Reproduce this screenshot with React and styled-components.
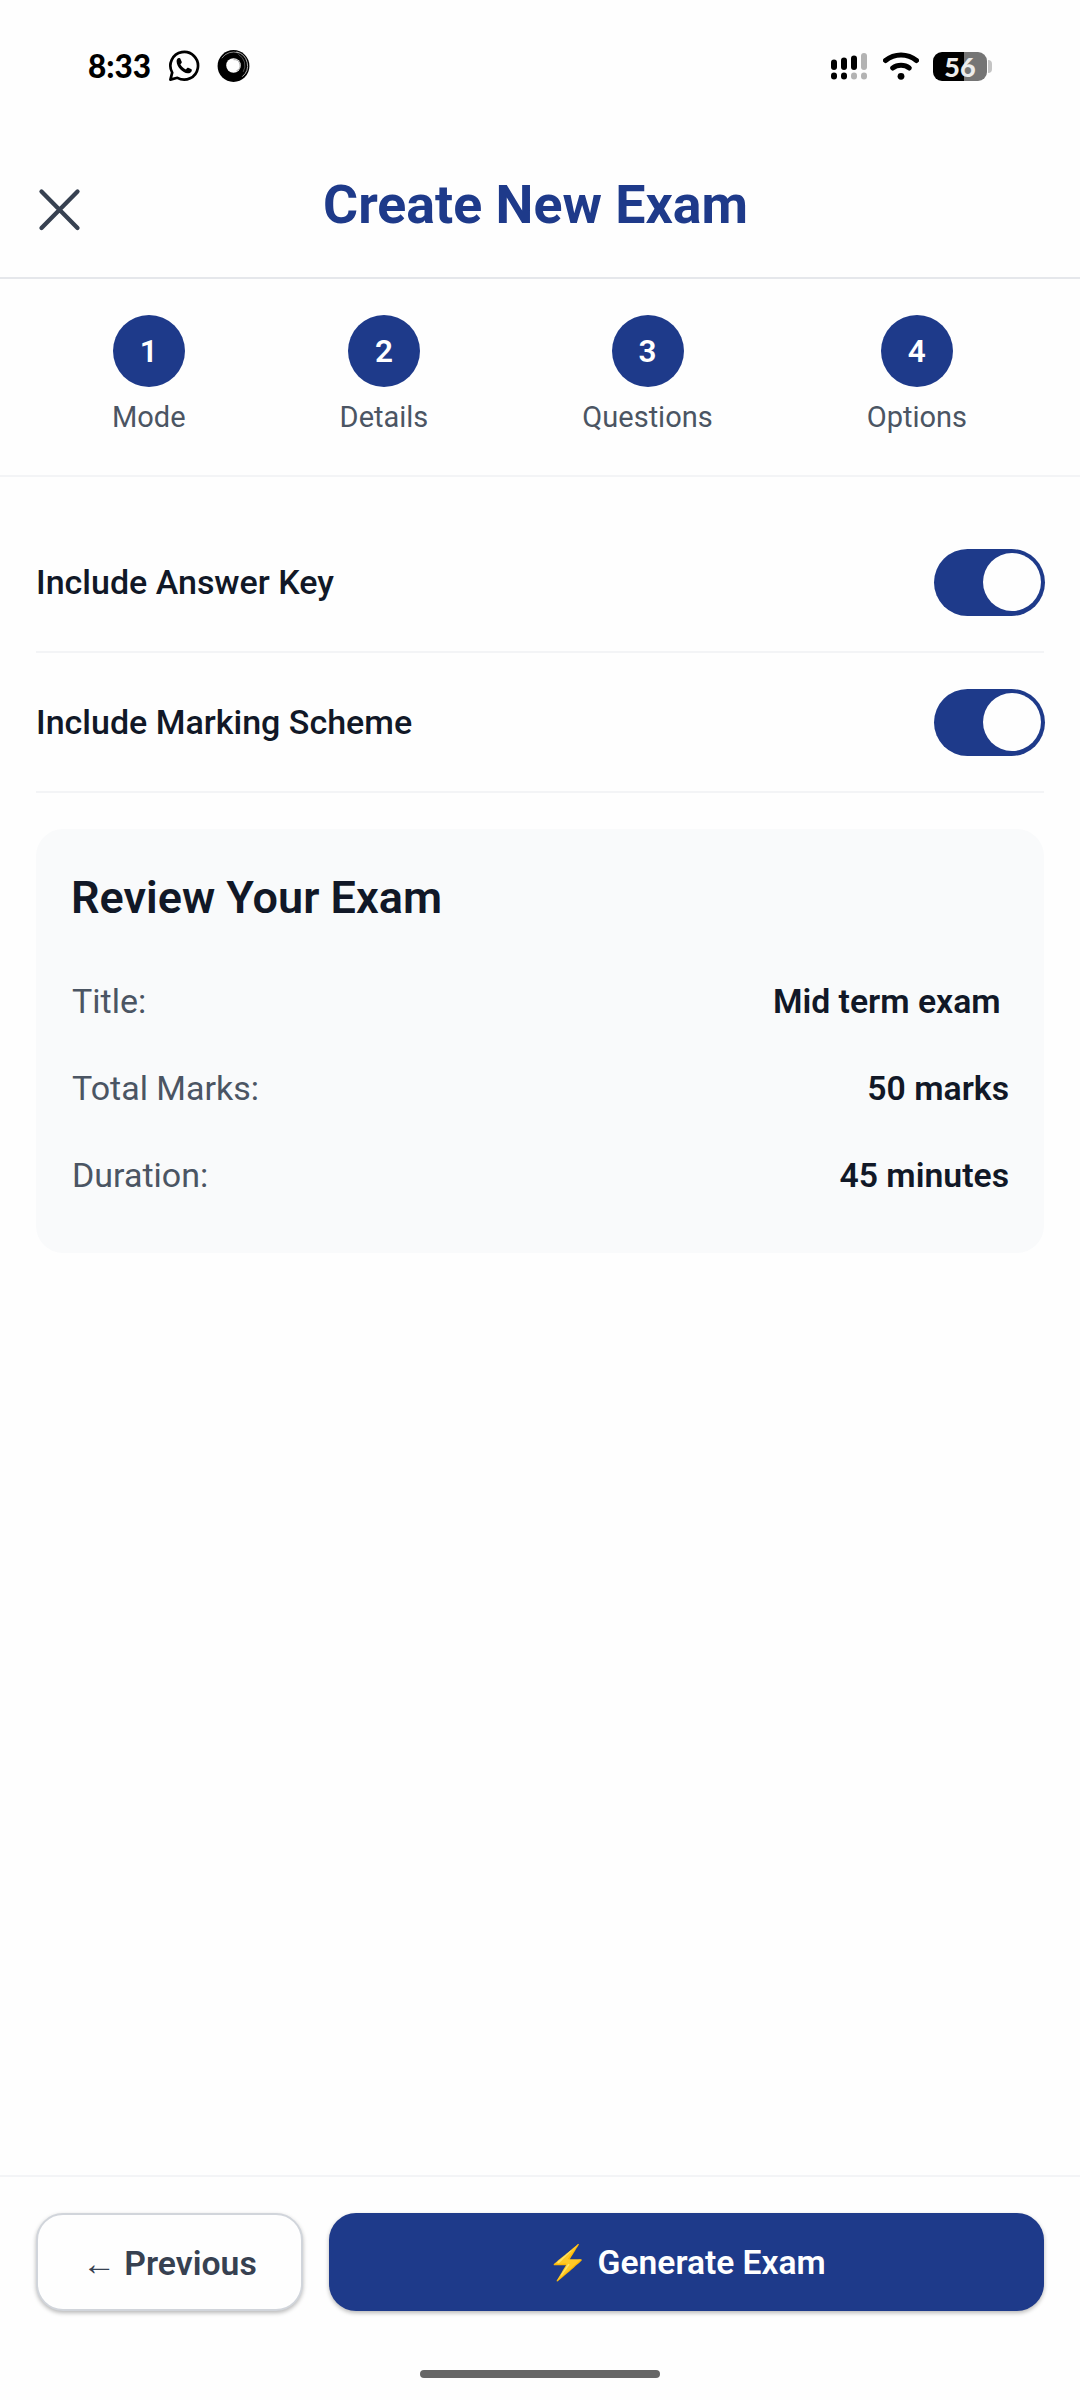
import React, { useState } from "react";
import styled, { createGlobalStyle } from "styled-components";

const GlobalStyle = createGlobalStyle`
  *, *::before, *::after { box-sizing: border-box; }
  body {
    margin: 0;
    background: #fefefe;
    font-family: Roboto, "Liberation Sans", sans-serif;
    color: #111827;
  }
  button { font-family: inherit; }
`;

const Screen = styled.div`
  width: 1080px;
  height: 2400px;
  display: flex;
  flex-direction: column;
  overflow: hidden;
  background: #fefefe;
`;

const StatusBar = styled.div`
  height: 132px;
  padding: 0 88px;
  display: flex;
  align-items: center;
  justify-content: space-between;
`;

const StatusGroup = styled.div`
  display: flex;
  align-items: center;
  gap: ${(p) => p.$gap}px;
`;

const Clock = styled.span`
  font-family: Lato, sans-serif;
  font-size: 31.5px;
  font-weight: 900;
  line-height: 40px;
  width: 63px;
  color: #000;
  white-space: nowrap;
`;

const Battery = styled.div`
  margin-left: -2px;
  display: flex;
  align-items: center;
  gap: 1px;
`;

const BatteryBody = styled.div`
  width: 54px;
  height: 29px;
  border-radius: 9px;
  display: flex;
  align-items: center;
  justify-content: center;
  background: linear-gradient(to right, #000 57.5%, #757575 57.5%);
  color: #ececec;
  font-family: Lato, sans-serif;
  font-weight: 900;
  font-size: 27px;
  line-height: 29px;
`;

const BatteryNub = styled.div`
  width: 4px;
  height: 13px;
  border-radius: 0 4px 4px 0;
  background: #c4c4c4;
`;

const Header = styled.header`
  height: 147px;
  padding: 0 36px 0 36px;
  display: flex;
  align-items: center;
  border-bottom: 2px solid #e5e7eb;
`;

const CloseButton = styled.button`
  width: 46px;
  height: 46px;
  margin-top: 8px;
  padding: 0;
  border: 0;
  background: none;
  display: flex;
`;

const Title = styled.h1`
  flex: 1;
  margin: 0 55px 0 0;
  text-align: center;
  font-size: 53.7px;
  line-height: 64px;
  font-weight: 700;
  color: #1e3a8a;
`;

const Steps = styled.nav`
  height: 198px;
  padding: 36px 36px 0 35px;
  display: flex;
  justify-content: space-around;
  align-items: flex-start;
  border-bottom: 2px solid #f3f4f6;
`;

const Step = styled.div`
  display: flex;
  flex-direction: column;
  align-items: center;
  gap: 13px;
`;

const StepNumber = styled.div`
  width: 72px;
  height: 72px;
  border-radius: 50%;
  display: flex;
  align-items: center;
  justify-content: center;
  background: #1e3a8a;
  color: #fff;
  font-size: 31.5px;
  font-weight: 600;
`;

const StepLabel = styled.span`
  font-size: 29px;
  line-height: 34px;
  color: #4b5563;
`;

const Content = styled.main`
  flex: 1;
  padding: 36px 36px 0;
`;

const OptionRow = styled.div`
  height: 140px;
  display: flex;
  align-items: center;
  justify-content: space-between;
  border-bottom: 2px solid #f3f4f6;
`;

const OptionLabel = styled.span`
  font-size: 34px;
  line-height: 40px;
  font-weight: 500;
`;

const Track = styled.button`
  width: 111px;
  height: 67px;
  margin: 0 -1px 0 0;
  padding: 0 4px;
  border: 0;
  border-radius: 34px;
  display: flex;
  align-items: center;
  justify-content: ${(p) => (p.$on ? "flex-end" : "flex-start")};
  background: ${(p) => (p.$on ? "#1e3a8a" : "#d1d5db")};
`;

const Knob = styled.span`
  width: 58px;
  height: 58px;
  margin-bottom: 1px;
  border-radius: 50%;
  background: #fefefe;
`;

const Card = styled.section`
  height: 424px;
  margin-top: 36px;
  padding: 36px;
  border-radius: 27px;
  background: #f9fafb;
`;

const CardTitle = styled.h2`
  margin: 6px 0 33px -1px;
  font-size: 45px;
  line-height: 54px;
  font-weight: 600;
`;

const DetailRow = styled.div`
  height: 87px;
  margin-right: -1px;
  padding-top: 23px;
  display: flex;
  align-items: baseline;
  justify-content: space-between;
  line-height: 40px;
`;

const DetailLabel = styled.span`
  font-size: 34px;
  color: #4b5563;
`;

const DetailValue = styled.span`
  font-size: 33.75px;
  font-weight: 600;
  white-space: pre;
`;

const Footer = styled.footer`
  height: 225px;
  padding-top: 36px;
  border-top: 2px solid #f3f4f6;
  display: flex;
  flex-direction: column;
  align-items: center;
  justify-content: space-between;
`;

const Actions = styled.div`
  width: 100%;
  padding: 0 36px;
  display: flex;
  gap: 26px;
`;

const ActionButton = styled.button`
  height: 98px;
  padding: ${(p) => (p.$primary ? 1 : 3)}px 0 0;
  flex: ${(p) => (p.$primary ? "1" : "0 0 267px")};
  border: ${(p) => (p.$primary ? "0" : "2px solid #d1d5db")};
  border-radius: 27px;
  display: flex;
  align-items: center;
  justify-content: center;
  background: ${(p) => (p.$primary ? "#1e3a8a" : "#fefefe")};
  color: ${(p) => (p.$primary ? "#fff" : "#374151")};
  box-shadow: 0 2px 4px rgba(0, 0, 0, 0.28);
  font-size: ${(p) => (p.$primary ? 33.6 : 33.75)}px;
  line-height: 40px;
  font-weight: 600;
`;

const HomeBar = styled.div`
  width: 240px;
  height: 8px;
  margin-bottom: 22px;
  border-radius: 4px;
  background: #666;
`;

const ChatIcon = () => (
  <svg width="32" height="32" viewBox="0 0 32 32" fill="none">
    <path
      d="M2.4 29.6 4.2 22.6A13.8 13.8 0 1 1 9.4 27.8Z"
      stroke="#000"
      strokeWidth="2.7"
      strokeLinejoin="round"
    />
    <path
      d="M8.6 11.2c0-1.8 1-3 2.2-3.2 1-.1 1.4.3 1.7 1l1.2 2.7c.3.8-.1 1.4-1.3 2.6 1.3 2.5 3 4.1 5.5 5.1 1.1-1.5 1.6-1.9 2.4-1.6l2.7 1.3c.8.4 1 .9.7 1.8-.6 1.7-2.2 2.5-4 2.4C14.6 22.9 8.7 17 8.6 11.2Z"
      fill="#000"
    />
  </svg>
);

const RingIcon = () => (
  <svg width="33" height="34" viewBox="0 0 34 34" fill="none">
    <circle cx="17" cy="17" r="16.4" fill="#000" />
    <circle cx="17" cy="16.5" r="7.5" fill="#fefefe" />
    <path d="M5 9A14.5 14.5 0 0 1 22 3.5" stroke="#aaa" strokeWidth="0.8" />
    <path d="M20 2.5A14.5 14.5 0 0 1 26 28" stroke="#ccc" strokeWidth="0.9" />
    <path d="M22 5A13 13 0 0 1 27 23" stroke="#777" strokeWidth="0.7" />
    <path d="M17 10.5A6 6 0 0 1 20 22" stroke="#888" strokeWidth="0.7" />
  </svg>
);

const SignalIcon = () => (
  <svg width="36" height="28" viewBox="0 0 36 28">
    <rect x="0" y="7.5" width="6" height="10.5" rx="3" />
    <rect x="10" y="5.5" width="6" height="12.5" rx="3" />
    <rect x="20" y="3.5" width="6" height="14.5" rx="3" />
    <rect x="30" y="1" width="6" height="17" rx="3" fill="#b3b3b3" />
    <rect x="0" y="20.5" width="6" height="7" rx="3" />
    <rect x="10" y="20.5" width="6" height="7" rx="3" />
    <rect x="20" y="20.5" width="6" height="7" rx="3" fill="#b3b3b3" />
    <rect x="30" y="20.5" width="6" height="7" rx="3" fill="#b3b3b3" />
  </svg>
);

const WifiIcon = () => (
  <svg width="36" height="28" viewBox="0 0 36 28" fill="none" stroke="#000" strokeLinecap="round">
    <path d="M2.5 8.5C11.5 1 24.5 1 33.5 8.5" strokeWidth="5" />
    <path d="M9.7 16C14.5 12.3 21.5 12.3 26.3 16" strokeWidth="5" />
    <circle cx="18" cy="24.3" r="3.4" fill="#000" stroke="none" />
  </svg>
);

const CloseIcon = () => (
  <svg width="46" height="46" viewBox="0 0 46 46" stroke="#374151" strokeWidth="4.3" strokeLinecap="round">
    <path d="M5.5 5.5 41.5 42M41.5 5.5 5.5 42" />
  </svg>
);

const STEPS = ["Mode", "Details", "Questions", "Options"];
const DETAILS = [
  ["Title:", "Mid term exam "],
  ["Total Marks:", "50 marks"],
  ["Duration:", "45 minutes"],
];

function Option({ label }) {
  const [on, setOn] = useState(true);
  return (
    <OptionRow>
      <OptionLabel>{label}</OptionLabel>
      <Track $on={on} role="switch" aria-checked={on} onClick={() => setOn(!on)}>
        <Knob />
      </Track>
    </OptionRow>
  );
}

export default function App() {
  return (
    <Screen>
      <GlobalStyle />
      <StatusBar>
        <StatusGroup $gap={17}>
          <Clock>8:33</Clock>
          <ChatIcon />
          <RingIcon />
        </StatusGroup>
        <StatusGroup $gap={16}>
          <SignalIcon />
          <WifiIcon />
          <Battery>
            <BatteryBody>56</BatteryBody>
            <BatteryNub />
          </Battery>
        </StatusGroup>
      </StatusBar>
      <Header>
        <CloseButton>
          <CloseIcon />
        </CloseButton>
        <Title>Create New Exam</Title>
      </Header>
      <Steps>
        {STEPS.map((name, i) => (
          <Step key={name}>
            <StepNumber>{i + 1}</StepNumber>
            <StepLabel>{name}</StepLabel>
          </Step>
        ))}
      </Steps>
      <Content>
        <Option label="Include Answer Key" />
        <Option label="Include Marking Scheme" />
        <Card>
          <CardTitle>Review Your Exam</CardTitle>
          {DETAILS.map(([label, value]) => (
            <DetailRow key={label}>
              <DetailLabel>{label}</DetailLabel>
              <DetailValue>{value}</DetailValue>
            </DetailRow>
          ))}
        </Card>
      </Content>
      <Footer>
        <Actions>
          <ActionButton>← Previous</ActionButton>
          <ActionButton $primary>⚡ Generate Exam</ActionButton>
        </Actions>
        <HomeBar />
      </Footer>
    </Screen>
  );
}
